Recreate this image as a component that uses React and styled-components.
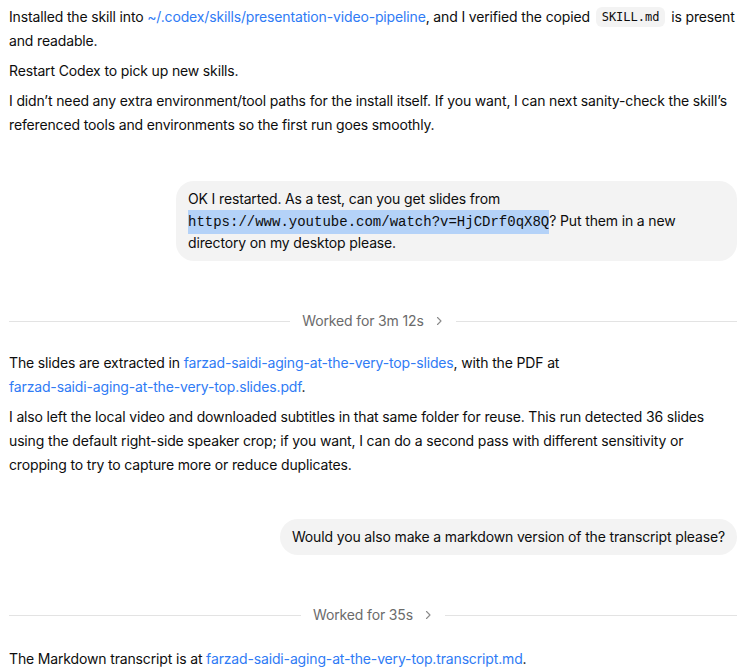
import React from "react";
import styled, { createGlobalStyle } from "styled-components";

const GlobalStyle = createGlobalStyle`
  html, body {
    margin: 0;
    padding: 0;
    background: #ffffff;
  }
  body {
    font-family: Inter, "Noto Sans", "Liberation Sans", sans-serif;
    color: #0d0d0d;
    -webkit-font-smoothing: antialiased;
  }
`;

// whole conversation column
const Thread = styled.div`
  display: flex;
  flex-direction: column;
  padding: 5px 8px 0 9px;
  font-size: 14px;
  letter-spacing: -0.15px;
`;

// assistant answer block
const Answer = styled.div`
  display: flex;
  flex-direction: column;
  gap: 6px;
  margin-top: ${(p) => p.$top || 0}px;
`;

const Para = styled.p`
  margin: 0;
  line-height: 24px;
`;

const Link = styled.a`
  color: #2f7bf5;
  text-decoration: none;
  white-space: nowrap;
  cursor: pointer;
`;

const Code = styled.code`
  font-family: "DejaVu Sans Mono", "Liberation Mono", monospace;
  font-size: 12px;
  line-height: 1;
  vertical-align: 1px;
  letter-spacing: 0;
  background: #f3f3f3;
  border-radius: 6px;
  padding: 3px 6px;
  margin: 0 2px;
`;

// user message row, bubble pushed right
const UserRow = styled.div`
  display: flex;
  justify-content: flex-end;
  margin-top: ${(p) => p.$top}px;
`;

const Bubble = styled.div`
  max-width: 561px;
  box-sizing: border-box;
  background: #f3f3f3;
  border-radius: 18px;
  padding: 7px 12px;
  line-height: 22px;
`;

const Mono = styled.span`
  font-family: "Liberation Mono", "DejaVu Sans Mono", monospace;
  font-size: 14px;
  line-height: 1;
  letter-spacing: 0;
  background: #b4d2f8;
  padding: 4px 0;
`;

// "Worked for ..." separator
const Divider = styled.div`
  display: flex;
  align-items: center;
  gap: 12px;
  height: 20px;
  margin-top: ${(p) => p.$top}px;
  color: #6b6b6b;
`;

const Rule = styled.div`
  flex: 1;
  height: 1px;
  background: #e3e3e3;
`;

const DividerLabel = styled.div`
  display: flex;
  align-items: center;
  gap: 10px;
  line-height: 20px;
`;

const Chevron = () => (
  <svg width="10" height="10" viewBox="0 0 10 10" fill="none">
    <path d="M3.5 1.5 L7 5 L3.5 8.5" stroke="#8a8a8a" strokeWidth="1.1" strokeLinecap="round" strokeLinejoin="round" />
  </svg>
);

function WorkedFor({ time, top }) {
  return (
    <Divider $top={top}>
      <Rule />
      <DividerLabel>
        Worked for {time}
        <Chevron />
      </DividerLabel>
      <Rule />
    </Divider>
  );
}

export default function App() {
  return (
    <>
      <GlobalStyle />
      <Thread>
        <Answer>
          <Para>
            Installed the skill into <Link>~/.codex/skills/presentation-video-pipeline</Link>, and I verified the copied <Code>SKILL.md</Code> is present and readable.
          </Para>
          <Para>Restart Codex to pick up new skills.</Para>
          <Para>
            I didn’t need any extra environment/tool paths for the install itself. If you want, I can next sanity-check the skill’s referenced tools and environments so the first run goes smoothly.
          </Para>
        </Answer>

        <UserRow $top={44}>
          <Bubble>
            OK I restarted. As a test, can you get slides from <Mono>https://www.youtube.com/watch?v=HjCDrf0qX8Q</Mono>? Put them in a new directory on my desktop please.
          </Bubble>
        </UserRow>

        <WorkedFor time="3m 12s" top={50} />

        <Answer $top={20}>
          <Para>
            The slides are extracted in <Link>farzad-saidi-aging-at-the-very-top-slides</Link>, with the PDF at <Link>farzad-saidi-aging-at-the-very-top.slides.pdf</Link>.
          </Para>
          <Para>
            I also left the local video and downloaded subtitles in that same folder for reuse. This run detected 36 slides using the default right-side speaker crop; if you want, I can do a second pass with different sensitivity or cropping to try to capture more or reduce duplicates.
          </Para>
        </Answer>

        <UserRow $top={42}>
          <Bubble>Would you also make a markdown version of the transcript please?</Bubble>
        </UserRow>

        <WorkedFor time="35s" top={50} />

        <Answer $top={22}>
          <Para>
            The Markdown transcript is at <Link>farzad-saidi-aging-at-the-very-top.transcript.md</Link>.
          </Para>
        </Answer>
      </Thread>
    </>
  );
}
